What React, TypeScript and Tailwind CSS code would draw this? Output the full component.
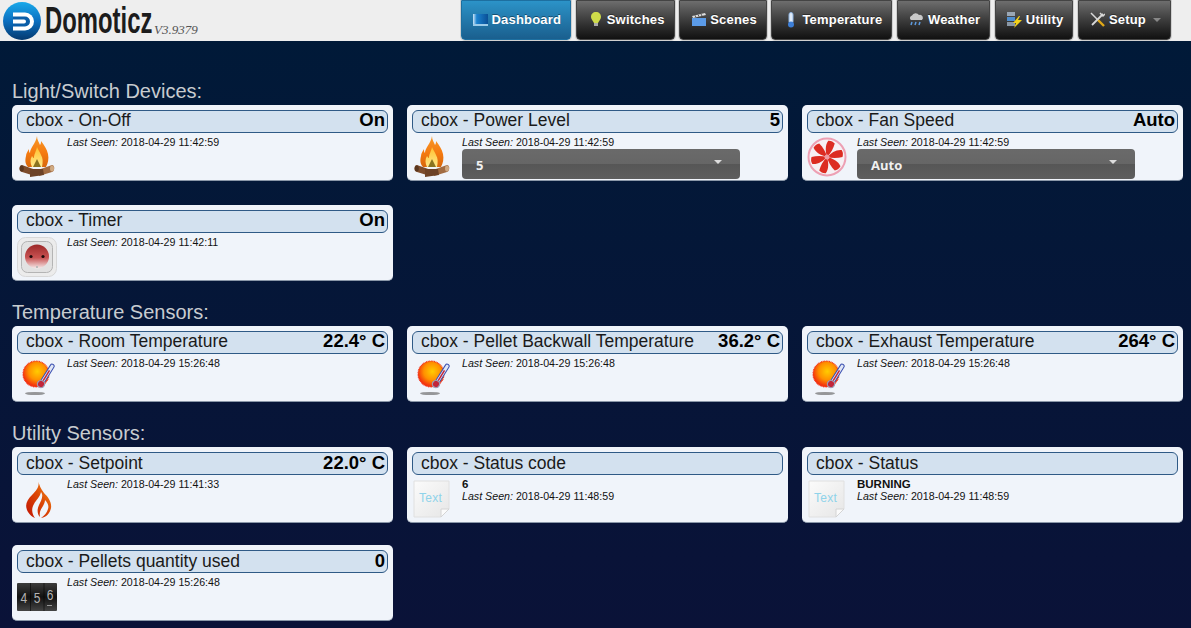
import type { ReactNode } from 'react';

const Fire = () => (
  <svg viewBox="0 0 36 42" className="w-[36px] h-[42px]">
    <defs>
      <linearGradient id="fireOuter" x1="0" y1="0" x2="0" y2="1">
        <stop offset="0" stopColor="#f79a2a" />
        <stop offset="0.55" stopColor="#f57a10" />
        <stop offset="1" stopColor="#d8680c" />
      </linearGradient>
      <linearGradient id="fireInner" x1="0" y1="0" x2="0" y2="1">
        <stop offset="0" stopColor="#ffc02e" />
        <stop offset="1" stopColor="#ffe98a" />
      </linearGradient>
    </defs>
    <path d="M18 0c0 4 2 6 3 9 1-1 1-3 1-4 3 4 6 8 7 13 1 5 0 9-2 13H9c-3-3-3-7-2-11 0-3 2-5 3-7 0 2 0 3 1 4 0-5 6-10 7-17z" fill="url(#fireOuter)" />
    <path d="M18 11c1 3 3 5 4 8 2 3 2 7 1 12H13c-2-4-2-8 0-11 1 1 1 2 2 2 0-4 2-6 3-11z" fill="url(#fireInner)" />
    <path d="M14 31l4-8 4 8z" fill="#8a7420" />
    <path d="M3 29l14 5-1 6-13-4c-4-1-3-7 0-7z" fill="#7d4c2c" />
    <path d="M33 29l-14 5 1 6 13-4c3-1 3-7 0-7z" fill="#a26c42" />
    <path d="M11 33l13 0 1 6-14 2z" fill="#6d4226" />
    <ellipse cx="2.800" cy="32.500" rx="2" ry="3" fill="#59361f" />
    <ellipse cx="33" cy="32.500" rx="2" ry="3" fill="#cfa982" />
  </svg>
);

const Socket = () => (
  <svg viewBox="0 0 40 40" className="w-[40px] h-[40px]">
    <defs>
      <linearGradient id="socketFace" x1="0" y1="0" x2="0" y2="1">
        <stop offset="0" stopColor="#9c2828" />
        <stop offset="0.55" stopColor="#c85252" />
        <stop offset="1" stopColor="#f6ecec" />
      </linearGradient>
    </defs>
    <rect x="0.500" y="0.500" width="39" height="39" rx="8" fill="#ececec" stroke="#d8d8d8" />
    <rect x="4.500" y="4.500" width="31" height="31" rx="6" fill="#e2e2e2" stroke="#b4b4b4" />
    <circle cx="20" cy="19.500" r="12" fill="url(#socketFace)" />
    <circle cx="14" cy="19.500" r="1.600" fill="#1e0a0a" />
    <circle cx="26" cy="19.500" r="1.600" fill="#1e0a0a" />
    <rect x="19" y="29" width="2" height="2" fill="#bdbdbd" />
  </svg>
);

const Fan = () => (
  <svg viewBox="0 0 40 40" className="w-[40px] h-[40px]">
    <circle cx="20" cy="20" r="18.500" fill="#f6f0f4" stroke="#eda0b4" strokeWidth="2" />
    {[15, 75, 135, 195, 255, 315].map((deg) => (
      <path key={deg} d="M20 20C17 15 15 9 17 4c3-1 5 0 7 1 0 5-1 10-4 15z" fill="#dc2c22" transform={`rotate(${deg} 20 20)`} />
    ))}
    <circle cx="20" cy="20" r="2.500" fill="#ee9aa0" />
  </svg>
);

const Thermo = () => (
  <svg viewBox="0 0 36 36" className="w-[36px] h-[36px]">
    <defs>
      <radialGradient id="sunFill" cx="0.550" cy="0.400" r="0.550">
        <stop offset="0" stopColor="#ffcc00" />
        <stop offset="0.6" stopColor="#ff9000" />
        <stop offset="1" stopColor="#f4380e" />
      </radialGradient>
    </defs>
    <ellipse cx="16" cy="33.500" rx="10" ry="1.600" fill="#6d6d6d" opacity="0.700" />
    <circle cx="17" cy="14" r="13" fill="url(#sunFill)" stroke="#f02a18" strokeWidth="1.200" strokeDasharray="0.800 0.800" />
    <g transform="rotate(32 22 24)">
      <rect x="20" y="1" width="4" height="21" rx="2" fill="#dfe6f5" stroke="#3a4fb0" strokeWidth="1" />
      <rect x="21.300" y="8" width="1.500" height="14" fill="#c2253a" />
      <circle cx="22" cy="24" r="3.600" fill="#c2253a" stroke="#9aa0b8" strokeWidth="1.200" />
    </g>
  </svg>
);

const Flame = () => (
  <svg viewBox="0 0 30 40" className="w-[30px] h-[40px]">
    <defs>
      <linearGradient id="flameFill" x1="0" y1="1" x2="1" y2="0">
        <stop offset="0" stopColor="#c01204" />
        <stop offset="0.55" stopColor="#dd4a06" />
        <stop offset="1" stopColor="#f79a1a" />
      </linearGradient>
    </defs>
    <path d="M16 1c2 6-1 10-6 15C5 21 2 26 6 33c2 3 4 5 7 6-3-4-4-9-1-14 2-4 6-7 7-12 3 4 0 9-2 13-2 4-2 9 1 12-1-5 1-8 3-11 1-2 2-4 2-6 3 3 4 6 3 9-1 4-4 7-7 9 6-1 9-5 10-10 1-6-3-11-7-15-3-4-5-8-6-13z" fill="url(#flameFill)" />
  </svg>
);

const TextDoc = () => (
  <svg viewBox="0 0 38 38" className="w-[38px] h-[38px]">
    <defs>
      <linearGradient id="docFill" x1="0" y1="0" x2="1" y2="1">
        <stop offset="0" stopColor="#fbfbfb" />
        <stop offset="1" stopColor="#e6e6e6" />
      </linearGradient>
    </defs>
    <path d="M1 1h35v28l-8 8H1z" fill="url(#docFill)" stroke="#e0e0e0" />
    <path d="M36 29h-8v8z" fill="#fbfbfb" stroke="#d4d4d4" />
    <text x="6" y="22" fontSize="12" fill="#8fd3ea" fontFamily="'Liberation Sans', sans-serif" letterSpacing="0.300">Text</text>
  </svg>
);

const Counter = () => (
  <svg viewBox="0 0 40 28" className="w-[40px] h-[28px]">
    <defs>
      <linearGradient id="counterFill" x1="0" y1="0" x2="0" y2="1">
        <stop offset="0" stopColor="#3c3c3c" />
        <stop offset="0.5" stopColor="#111" />
        <stop offset="1" stopColor="#444" />
      </linearGradient>
    </defs>
    <rect width="40" height="28" rx="1" fill="url(#counterFill)" />
    <path d="M13.500 0v28M27 0v28" stroke="#000" strokeWidth="1" opacity="0.500" />
    <g transform="scale(0.800 1)" fill="#b4b4b4" fontSize="15" textAnchor="middle" fontFamily="'Liberation Sans', sans-serif">
      <text x="8.500" y="20">4</text>
      <text x="25" y="20">5</text>
      <text x="41.500" y="17">6</text>
    </g>
    <rect x="30" y="22" width="5" height="1" fill="#999" />
  </svg>
);

const Logo = () => (
  <svg viewBox="0 0 38 38" className="w-[38px] h-[38px] shrink-0">
    <defs>
      <linearGradient id="logoFill" x1="0" y1="0" x2="0" y2="1">
        <stop offset="0" stopColor="#19a9ea" />
        <stop offset="0.5" stopColor="#0b6fc0" />
        <stop offset="1" stopColor="#04396f" />
      </linearGradient>
    </defs>
    <circle cx="19" cy="19" r="19" fill="url(#logoFill)" />
    <path d="M10 10.500h12a9 9 0 0 1 0 18H10z" fill="#fff" />
    <path d="M10 14.500h12a5 5 0 0 1 0 10H10v-3h11a2 2 0 0 0 0-4H10z" fill="#0b5ea8" />
  </svg>
);

const NavDashboard = () => (
  <svg viewBox="0 0 15 14" className="w-[15px] h-[14px]">
    <defs>
      <linearGradient id="navScreen" x1="0" y1="0" x2="1" y2="0">
        <stop offset="0" stopColor="#cfe6f6" />
        <stop offset="0.25" stopColor="#1a82cf" />
        <stop offset="1" stopColor="#0a4f96" />
      </linearGradient>
    </defs>
    <rect y="1" width="15" height="10" fill="url(#navScreen)" />
    <rect y="11" width="15" height="2" fill="#9ccbe8" />
  </svg>
);
const NavBulb = () => (
  <svg viewBox="0 0 10 15" className="w-[10px] h-[15px]">
    <path d="M5 0c3 0 5 2 5 5 0 2-2 4-3 6H3C2 9 0 7 0 5c0-3 2-5 5-5z" fill="#cfdc4a" />
    <rect x="3" y="11" width="4" height="3" fill="#aaa" />
  </svg>
);
const NavScene = () => (
  <svg viewBox="0 0 14 13" className="w-[14px] h-[13px]">
    <path d="M0 3l13-3 1 2-13 3z" fill="#ddd" />
    <path d="M3 2.300l1 2M6 1.600l1 2M9 1l1 2" stroke="#333" strokeWidth="0.800" />
    <rect y="5" width="14" height="8" fill="#5b9be8" />
  </svg>
);
const NavTemp = () => (
  <svg viewBox="0 0 8 16" className="w-[8px] h-[16px]">
    <rect x="2" y="0.500" width="4" height="11" rx="2" fill="#dfeaf8" stroke="#8fb4e0" />
    <circle cx="4" cy="12.500" r="3" fill="#3d7fd8" />
  </svg>
);
const NavWeather = () => (
  <svg viewBox="0 0 15 13" className="w-[15px] h-[13px]">
    <path d="M2 7a2.500 2.500 0 0 1 1-4.500A4 4 0 0 1 10 2a3 3 0 0 1 3 5z" fill="#c8c8c8" />
    <path d="M3 9l-1 3M7 9l-1 3M11 9l-1 3" stroke="#5d9be0" strokeWidth="1.500" />
  </svg>
);
const NavUtility = () => (
  <svg viewBox="0 0 15 16" className="w-[15px] h-[16px]">
    <rect width="8" height="4" fill="#9aa7b5" />
    <rect y="5" width="8" height="4" fill="#4f8fd0" />
    <rect y="10" width="8" height="4" fill="#8a97a5" />
    <path d="M12 4L6 11h3l-2 5 8-8h-4l2-4z" fill="#f4d21a" />
  </svg>
);
const NavSetup = () => (
  <svg viewBox="0 0 15 15" className="w-[15px] h-[15px]">
    <path d="M1 1l6.500 6.500" stroke="#d8d8d8" strokeWidth="1.500" />
    <path d="M7.500 7.500l6.500 6.500" stroke="#e0a818" strokeWidth="2.400" />
    <path d="M13 2L2 13" stroke="#d8d8d8" strokeWidth="1.800" />
    <path d="M10 1l3 3 2-2" stroke="#d8d8d8" strokeWidth="1.500" fill="none" />
  </svg>
);

const navItems: { label: string; icon: ReactNode; active?: boolean; caret?: boolean }[] = [
  { label: 'Dashboard', icon: <NavDashboard />, active: true },
  { label: 'Switches', icon: <NavBulb /> },
  { label: 'Scenes', icon: <NavScene /> },
  { label: 'Temperature', icon: <NavTemp /> },
  { label: 'Weather', icon: <NavWeather /> },
  { label: 'Utility', icon: <NavUtility /> },
  { label: 'Setup', icon: <NavSetup />, caret: true },
];

type Device = {
  name: string;
  value?: string;
  seen: string;
  icon: ReactNode;
  select?: string;
  text?: string;
};

const sections: { title: string; rowGap: string; barPad: string; devices: Device[] }[] = [
  {
    title: 'Light/Switch Devices:',
    rowGap: 'gap-y-[24px]',
    barPad: 'pb-[2px]',
    devices: [
      { name: 'cbox - On-Off', value: 'On', seen: '2018-04-29 11:42:59', icon: <Fire /> },
      { name: 'cbox - Power Level', value: '5', seen: '2018-04-29 11:42:59', icon: <Fire />, select: '5' },
      { name: 'cbox - Fan Speed', value: 'Auto', seen: '2018-04-29 11:42:59', icon: <Fan />, select: 'Auto' },
      { name: 'cbox - Timer', value: 'On', seen: '2018-04-29 11:42:11', icon: <Socket /> },
    ],
  },
  {
    title: 'Temperature Sensors:',
    rowGap: 'gap-y-[24px]',
    barPad: 'pb-[2px]',
    devices: [
      { name: 'cbox - Room Temperature', value: '22.4° C', seen: '2018-04-29 15:26:48', icon: <Thermo /> },
      { name: 'cbox - Pellet Backwall Temperature', value: '36.2° C', seen: '2018-04-29 15:26:48', icon: <Thermo /> },
      { name: 'cbox - Exhaust Temperature', value: '264° C', seen: '2018-04-29 15:26:48', icon: <Thermo /> },
    ],
  },
  {
    title: 'Utility Sensors:',
    rowGap: 'gap-y-[22px]',
    barPad: 'pb-0',
    devices: [
      { name: 'cbox - Setpoint', value: '22.0° C', seen: '2018-04-29 11:41:33', icon: <Flame /> },
      { name: 'cbox - Status code', seen: '2018-04-29 11:48:59', icon: <TextDoc />, text: '6' },
      { name: 'cbox - Status', seen: '2018-04-29 11:48:59', icon: <TextDoc />, text: 'BURNING' },
      { name: 'cbox - Pellets quantity used', value: '0', seen: '2018-04-29 15:26:48', icon: <Counter /> },
    ],
  },
];

function DeviceCard({ device, barPad }: { device: Device; barPad: string }) {
  return (
    <div className="h-[76px] rounded-[5px] bg-[#f0f4fa] px-[5px] pt-[5px] border-b border-[#8a97a8]">
      <div className={`h-[23px] flex items-center justify-between rounded-[6px] border border-[#2f5a86] bg-[#d3e1ef] pl-[8px] pr-[2px] ${barPad}`}>
        <span className="text-[17.500px] leading-none text-[#1a1a1a]">{device.name}</span>
        {device.value && <span className="text-[18.500px] font-bold leading-none text-black">{device.value}</span>}
      </div>
      <div className="flex">
        <div className="w-[40px] h-[46px] mt-[1px] mr-[10px] shrink-0 flex items-center justify-center">{device.icon}</div>
        <div className="pt-[3px] text-[10.670px] leading-[12px] text-[#111]">
          {device.text && <div className="mt-[1px] text-[11.500px] leading-[11px] font-bold">{device.text}</div>}
          <div className="whitespace-nowrap"><i>Last Seen:</i> {device.seen}</div>
          {device.select && (
            <div className="mt-[1px] w-[278px] h-[30px] flex items-start justify-between rounded-[4px] bg-[linear-gradient(#6a6a6a_0%,#666666_50%,#565656_50%,#5e5e5e_100%)] pl-[14px] pr-[18px] pt-[7px] text-[13px] leading-[18px] font-bold text-[#f0f0f0] font-['Open_Sans',sans-serif]">
              <span>{device.select}</span>
              <span className="mt-[4px] border-x-[4px] border-t-[4px] border-x-transparent border-t-[#ddd]" />
            </div>
          )}
        </div>
      </div>
    </div>
  );
}

export default function App() {
  return (
    <div className="h-[628px] overflow-hidden bg-gradient-to-b from-[#001a38] to-[#0a1238] font-['Liberation_Sans',Arial,sans-serif]">
      <header className="h-[41px] flex items-start bg-[#eeeeee] pr-[20px]">
        <div className="flex items-start pl-[3px] pt-[2px]">
          <Logo />
          <div className="ml-[4px] w-[109px] h-[38px]">
            <span className="inline-block origin-left scale-x-[0.645] text-[37px] leading-[37px] font-bold text-[#1c1c1c]">Domoticz</span>
          </div>
          <span className="mt-[20px] text-[13px] italic leading-[16px] text-[#555] font-['Liberation_Serif',serif]">V3.9379</span>
        </div>
        <nav className="ml-auto flex gap-[4.500px]">
          {navItems.map((item) => (
            <div
              key={item.label}
              className={item.active
                ? 'h-[40px] flex items-center rounded-b-[4px] border border-[#1d6fa0] bg-gradient-to-b from-[#2c93c8] to-[#1a5f8e] pl-[11px] pr-[9px] pb-[1px] text-[13px] tracking-[0.2px] font-bold text-white ring-1 ring-[#d0d0d0] [text-shadow:0_-1px_0_rgba(0,0,0,0.4)]'
                : 'h-[40px] flex items-center rounded-b-[4px] border border-[#444] bg-gradient-to-b from-[#6e6e6e] to-[#111] pl-[11px] pr-[9px] pb-[1px] text-[13px] tracking-[0.2px] font-bold text-white ring-1 ring-[#d0d0d0] [text-shadow:0_-1px_0_rgba(0,0,0,0.4)]'}
            >
              <span className="w-[16px] mr-[3px] flex justify-center">{item.icon}</span>
              <span>{item.label}</span>
              {item.caret && <span className="ml-[7px] border-x-[4px] border-t-[4px] border-x-transparent border-t-[#888]" />}
            </div>
          ))}
        </nav>
      </header>
      <main className="pl-[12px] pr-[8px] pt-[40px]">
        {sections.map((section) => (
          <section key={section.title} className="mb-[21px]">
            <h2 className="h-[20px] mb-[4px] text-[20px] leading-[20px] text-[#c8ccd0]">{section.title}</h2>
            <div className={`grid grid-cols-3 gap-x-[14px] ${section.rowGap}`}>
              {section.devices.map((device) => (
                <DeviceCard key={device.name} device={device} barPad={section.barPad} />
              ))}
            </div>
          </section>
        ))}
      </main>
    </div>
  );
}
